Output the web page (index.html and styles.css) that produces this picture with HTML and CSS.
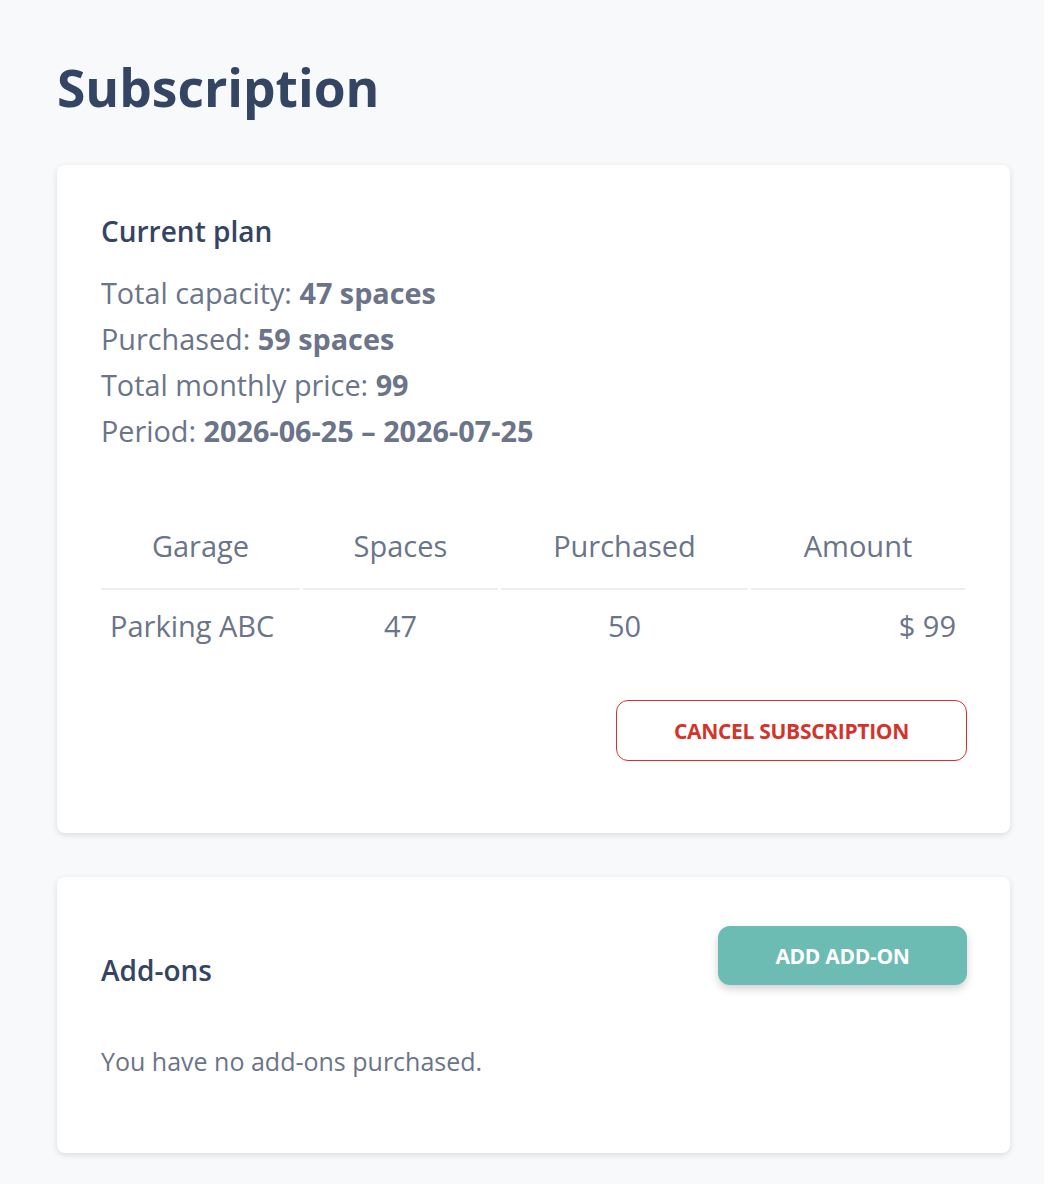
FILE: index.html
```html
<!DOCTYPE html>
<html lang="en">
<head>
    <meta charset="UTF-8">
    <meta name="viewport" content="width=device-width, initial-scale=1.0">
    <title>Subscription</title>
    <link rel="stylesheet" href="styles.css">
</head>
<body>
    <div class="page">
        <h1>Subscription</h1>

        <div class="card plan-card">
            <h2>Current plan</h2>
            <div class="plan-info">
                <div>Total capacity: <b>47 spaces</b></div>
                <div>Purchased: <b>59 spaces</b></div>
                <div>Total monthly price: <b>99</b></div>
                <div>Period: <b>2026-06-25 – 2026-07-25</b></div>
            </div>

            <table class="plan-table">
                <thead>
                    <tr>
                        <th class="col-garage">Garage</th>
                        <th class="col-spaces">Spaces</th>
                        <th class="col-purchased">Purchased</th>
                        <th class="col-amount">Amount</th>
                    </tr>
                </thead>
                <tbody>
                    <tr>
                        <td class="left">Parking ABC</td>
                        <td>47</td>
                        <td>50</td>
                        <td class="right">$ 99</td>
                    </tr>
                </tbody>
            </table>

            <div class="actions">
                <button class="btn btn-outline-danger">Cancel subscription</button>
            </div>
        </div>

        <div class="card addons-card">
            <div class="addons-head">
                <h2>Add-ons</h2>
                <button class="btn btn-teal">Add add-on</button>
            </div>
            <p class="empty">You have no add-ons purchased.</p>
        </div>
    </div>
</body>
</html>
```

FILE: styles.css
```css
body {
    margin: 0;
    padding: 0;
    background-color: #f7f9fb;
    font-family: 'Open Sans', sans-serif;
    color: #6b7489;
}
.page {
    padding: 51px 34px 32px 57px;
}
h1 {
    margin: 0 0 42px 0;
    font-size: 51.5px;
    font-weight: 700;
    line-height: 72px;
    color: #344563;
}
.card {
    background-color: #ffffff;
    border-radius: 8px;
    box-shadow: 0 2px 6px rgba(0, 0, 0, 0.12);
    padding: 43px 43px 72px 44px;
    margin-bottom: 44px;
}
h2 {
    margin: 0;
    font-size: 28px;
    font-weight: 600;
    line-height: 46px;
    color: #344563;
}
.plan-info {
    margin-top: 16px;
    font-size: 28.8px;
    line-height: 46px;
}
.plan-info b {
    font-weight: 700;
}
.plan-table {
    margin-top: 48px;
    border-collapse: separate;
    border-spacing: 3px 0;
    margin-left: -3px;
    width: calc(100% + 4px);
    font-size: 29px;
}
.plan-table th {
    font-weight: 500;
    height: 86px;
    border-bottom: 2px solid #eceef1;
    text-align: center;
    padding: 0 10px;
}
.plan-table td {
    height: 70px;
    text-align: center;
    padding: 0 9px;
}
.col-garage { width: 179px; }
.col-spaces { width: 175px; }
.col-purchased { width: 227px; }
.plan-table td.left { text-align: left; }
.plan-table td.right { text-align: right; }
.actions {
    display: flex;
    justify-content: flex-end;
    margin-top: 40px;
}
.btn {
    font-family: 'Open Sans', sans-serif;
    text-transform: uppercase;
    font-weight: 700;
    font-size: 21px;
    border-radius: 12px;
    cursor: pointer;
    letter-spacing: -0.3px;
}
.btn-outline-danger {
    width: 351px;
    height: 61px;
    background-color: #ffffff;
    color: #d2342b;
    border: 1px solid #d2342b;
}
.btn-teal {
    width: 249px;
    height: 59px;
    background-color: #6dbcb3;
    color: #ffffff;
    border: none;
    box-shadow: 0 4px 8px rgba(0, 0, 0, 0.18);
}
.addons-card {
    padding: 49px 43px 75px 44px;
}
.addons-head {
    display: flex;
    justify-content: space-between;
    align-items: flex-start;
}
.addons-head h2 {
    margin-top: 21px;
}
.empty {
    margin: 51px 0 0 0;
    font-size: 25px;
    line-height: 34px;
}
```
